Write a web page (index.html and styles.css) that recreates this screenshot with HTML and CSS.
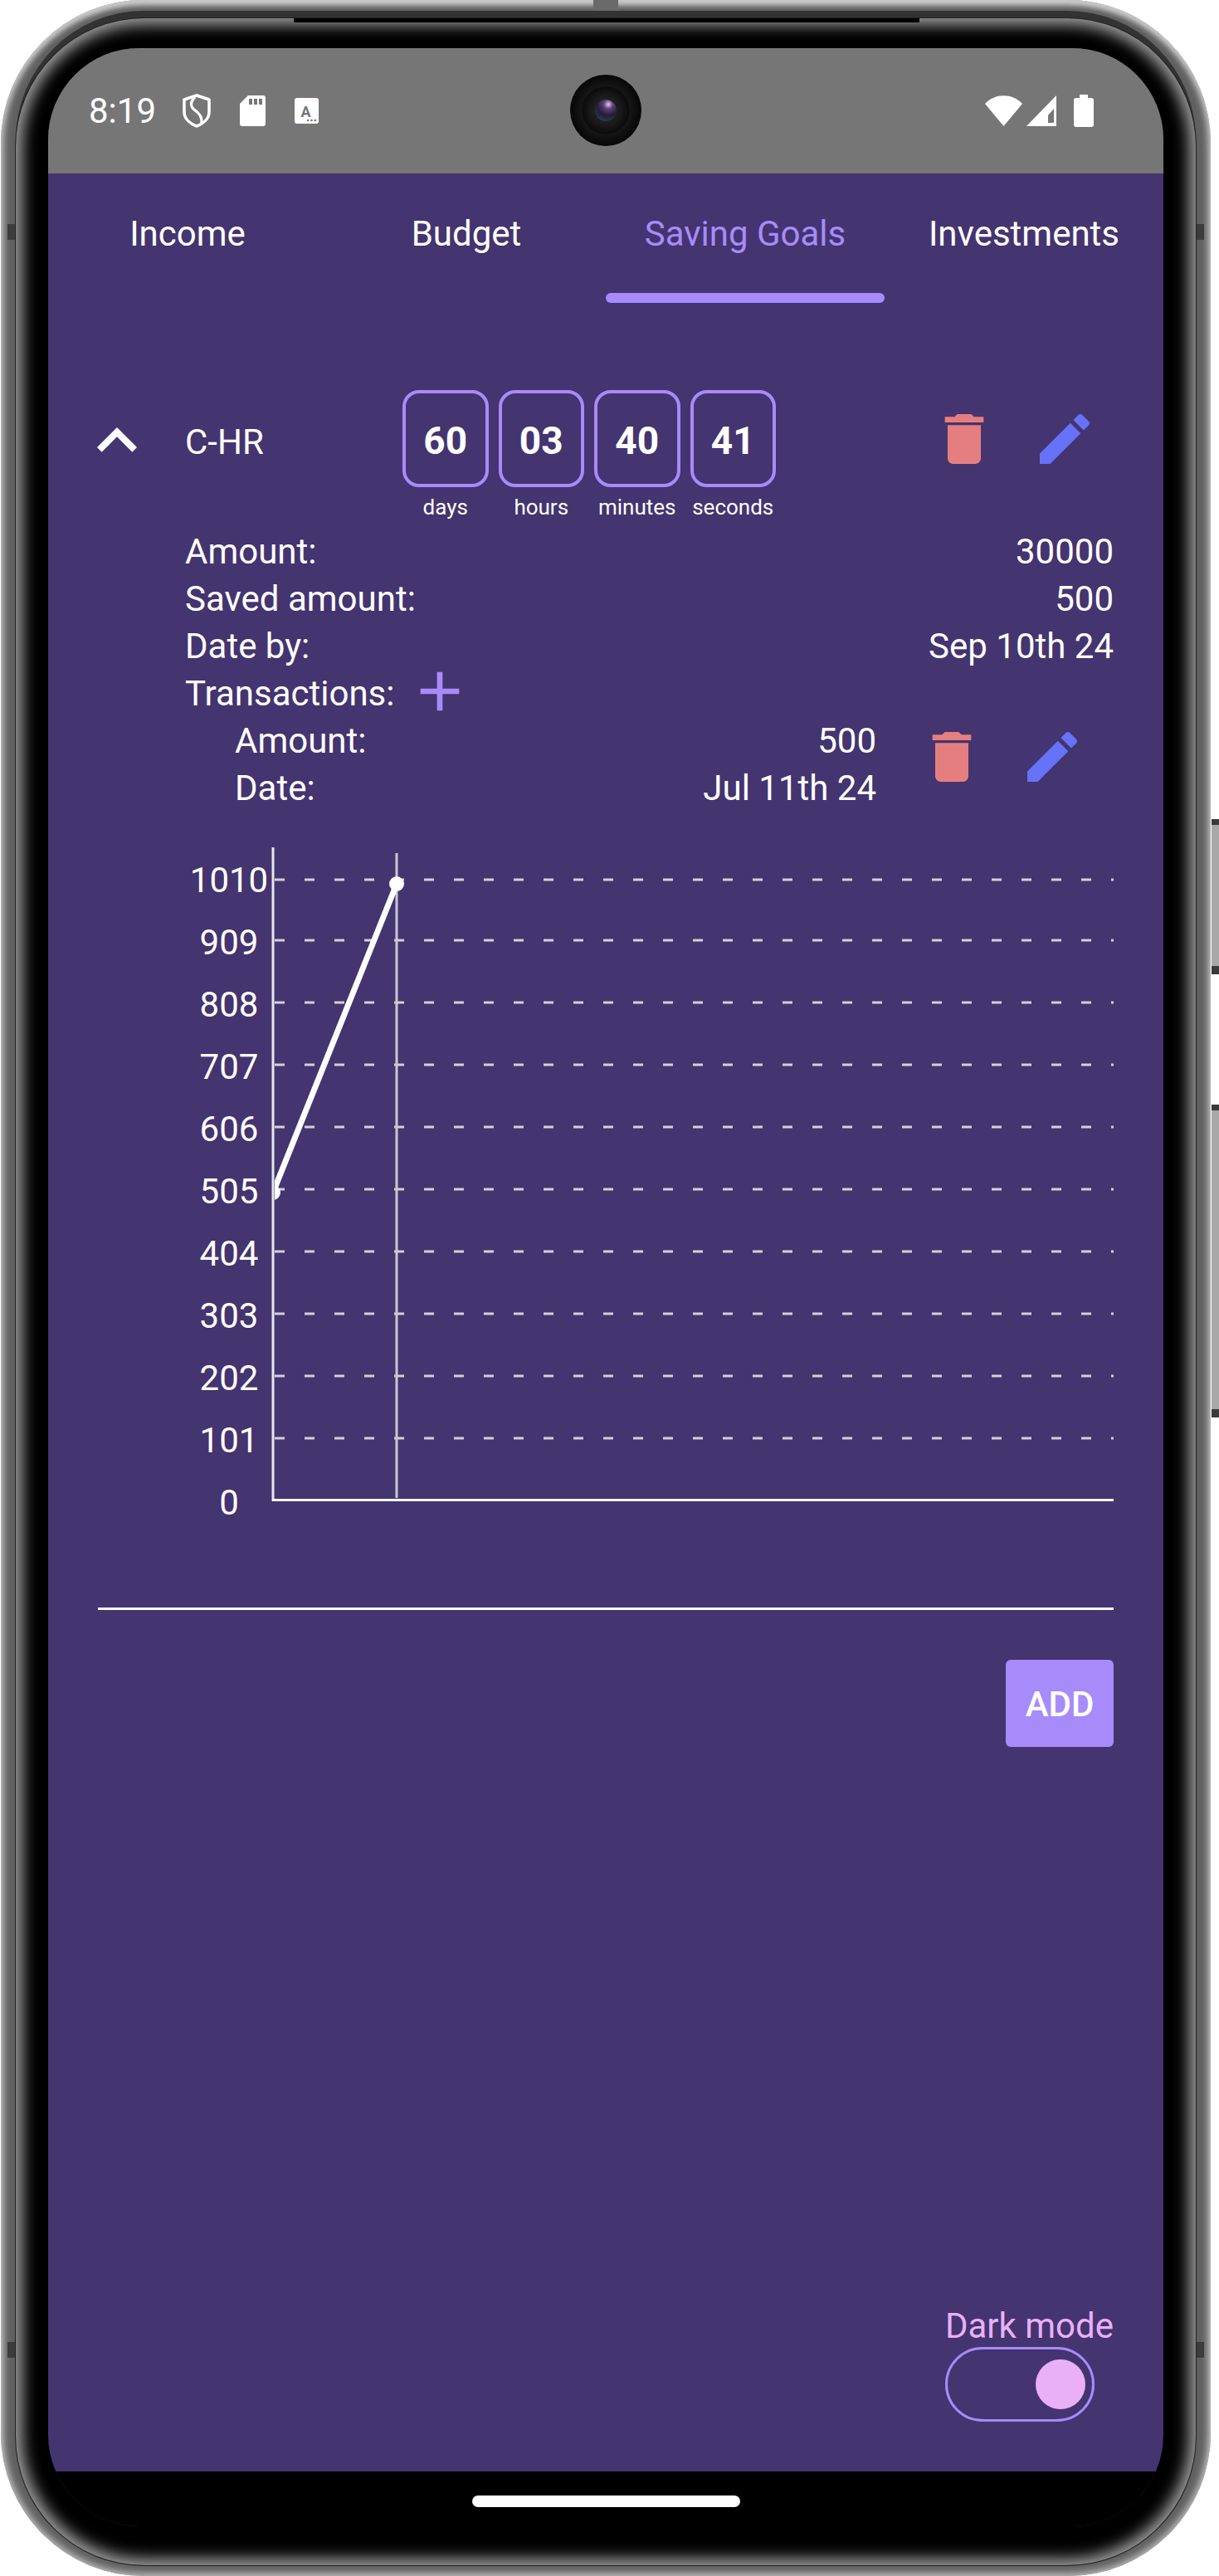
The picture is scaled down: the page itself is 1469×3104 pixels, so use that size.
FILE: index.html
```html
<!DOCTYPE html>
<html>
<head lang="en">
    <meta charset="UTF-8">
    <title>Saving Goals</title>
    <link rel="stylesheet" href="styles.css">
</head>
<body>
<div class="phone">
    <span class="slot-top"></span>
    <span class="seam seam-top"></span>
    <span class="seam seam-lt"></span>
    <span class="seam seam-rt"></span>
    <span class="seam seam-lb"></span>
    <span class="seam seam-rb"></span>
    <span class="side-btn side-btn-power"></span>
    <span class="side-btn side-btn-volume"></span>

    <div class="bezel">
        <div class="screen">
            <div class="camera"><span class="lens"></span></div>

            <div class="status-bar">
                <span class="time">8:19</span>
                <svg class="st-shield" width="34" height="41" viewBox="0 0 34 41">
                    <path d="M17 2L32 7V22C32 30 25 36 17 39C9 36 2 30 2 22V7Z" fill="none" stroke="#fff" stroke-width="3.6" stroke-linejoin="round"/>
                    <path d="M15 4C10 9 9 13 12 17C16 22 24 24 23 36" fill="none" stroke="#fff" stroke-width="3.2"/>
                </svg>
                <svg width="31" height="37" viewBox="0 0 31 37">
                    <path d="M10 0H28a3 3 0 0 1 3 3V34a3 3 0 0 1-3 3H3a3 3 0 0 1-3-3V10Z" fill="#fff"/>
                    <path d="M11 4h4v7h-4zM17 4h4v7h-4zM23 4h4v7h-4z" fill="#767676"/>
                </svg>
                <svg width="29" height="31" viewBox="0 0 29 31">
                    <rect width="29" height="31" rx="3" fill="#fff"/>
                    <text class="st-letter" x="13.5" y="23">A</text>
                    <circle cx="16" cy="27" r="1.3" fill="#767676"/>
                    <circle cx="20.5" cy="27" r="1.3" fill="#767676"/>
                    <circle cx="25" cy="27" r="1.3" fill="#767676"/>
                </svg>
                <div class="status-right">
                    <svg class="st-wifi" width="45" height="37" viewBox="0 0 45 37">
                        <path d="M22.5 37L0 10C12-3 33-3 45 10Z" fill="#fff"/>
                    </svg>
                    <svg class="st-signal" width="36" height="37" viewBox="0 0 36 37">
                        <path d="M0 37L36 0V37ZM26 24V33H33V16Z" fill="#fff" fill-rule="evenodd"/>
                    </svg>
                    <svg width="24" height="39" viewBox="0 0 24 39">
                        <path d="M7 0H17V4H21a3 3 0 0 1 3 3V36a3 3 0 0 1-3 3H3a3 3 0 0 1-3-3V7a3 3 0 0 1 3-3H7Z" fill="#fff"/>
                    </svg>
                </div>
            </div>

            <div class="main">
                <div class="tabs">
                    <div class="tab">Income</div>
                    <div class="tab">Budget</div>
                    <div class="tab tab-active">Saving Goals<span class="tab-line"></span></div>
                    <div class="tab">Investments</div>
                </div>

                <div class="goal-head">
                    <svg class="chevron" viewBox="0 0 24 24"><path d="M7.41 15.41L12 10.83l4.59 4.58L18 14l-6-6-6 6z"/></svg>
                    <div class="goal-title">C-HR</div>
                    <div class="timers">
                        <div class="timer"><div class="timer-box">60</div><div class="timer-label">days</div></div>
                        <div class="timer"><div class="timer-box">03</div><div class="timer-label">hours</div></div>
                        <div class="timer"><div class="timer-box">40</div><div class="timer-label">minutes</div></div>
                        <div class="timer"><div class="timer-box">41</div><div class="timer-label">seconds</div></div>
                    </div>
                    <div class="actions goal-actions">
                        <svg class="icon-trash" viewBox="0 0 24 24"><path d="M6 19c0 1.1.9 2 2 2h8c1.1 0 2-.9 2-2V7H6v12zM19 4h-3.5l-1-1h-5l-1 1H5v2h14V4z"/></svg>
                        <svg class="icon-edit" viewBox="0 0 24 24"><path d="M3 17.25V21h3.75L17.81 9.94l-3.75-3.75L3 17.25zM20.71 7.04c.39-.39.39-1.02 0-1.41l-2.34-2.34c-.39-.39-1.02-.39-1.41 0l-1.83 1.83 3.75 3.75 1.83-1.83z"/></svg>
                    </div>
                </div>

                <div class="details">
                    <div class="row"><span>Amount:</span><span>30000</span></div>
                    <div class="row"><span>Saved amount:</span><span>500</span></div>
                    <div class="row"><span>Date by:</span><span>Sep 10th 24</span></div>
                    <div class="row-add">
                        <span>Transactions:</span>
                        <svg class="icon-add" viewBox="0 0 24 24"><path d="M19 13h-6v6h-2v-6H5v-2h6V5h2v6h6v2z"/></svg>
                    </div>
                </div>

                <div class="transaction">
                    <div class="transaction-text">
                        <div class="row"><span>Amount:</span><span>500</span></div>
                        <div class="row"><span>Date:</span><span>Jul 11th 24</span></div>
                    </div>
                    <div class="actions transaction-actions">
                        <svg class="icon-trash" viewBox="0 0 24 24"><path d="M6 19c0 1.1.9 2 2 2h8c1.1 0 2-.9 2-2V7H6v12zM19 4h-3.5l-1-1h-5l-1 1H5v2h14V4z"/></svg>
                        <svg class="icon-edit" viewBox="0 0 24 24"><path d="M3 17.25V21h3.75L17.81 9.94l-3.75-3.75L3 17.25zM20.71 7.04c.39-.39.39-1.02 0-1.41l-2.34-2.34c-.39-.39-1.02-.39-1.41 0l-1.83 1.83 3.75 3.75 1.83-1.83z"/></svg>
                    </div>
                </div>

                <!-- chart: viewBox is in page coordinates -->
                <svg class="chart" width="1122" height="830" viewBox="220 1021 1122 830">
                    <defs>
                        <clipPath id="plot"><rect x="331" y="1021" width="1011" height="810"/></clipPath>
                    </defs>
                    <g class="grid">
                        <line x1="331" x2="1342" y1="1060" y2="1060"/>
                        <line x1="331" x2="1342" y1="1133" y2="1133"/>
                        <line x1="331" x2="1342" y1="1208" y2="1208"/>
                        <line x1="331" x2="1342" y1="1283" y2="1283"/>
                        <line x1="331" x2="1342" y1="1358" y2="1358"/>
                        <line x1="331" x2="1342" y1="1433" y2="1433"/>
                        <line x1="331" x2="1342" y1="1508" y2="1508"/>
                        <line x1="331" x2="1342" y1="1583" y2="1583"/>
                        <line x1="331" x2="1342" y1="1658" y2="1658"/>
                        <line x1="331" x2="1342" y1="1733" y2="1733"/>
                    </g>
                    <line class="cursor" x1="478" x2="478" y1="1028" y2="1805"/>
                    <line class="axis" x1="329" x2="329" y1="1021" y2="1809"/>
                    <line class="axis-x" x1="328" x2="1342" y1="1807.5" y2="1807.5"/>
                    <g clip-path="url(#plot)">
                        <line class="series" x1="329" y1="1437" x2="478" y2="1065"/>
                        <circle class="dot" cx="329" cy="1437" r="9"/>
                        <circle class="dot" cx="478" cy="1065" r="9"/>
                    </g>
                    <g class="ticks">
                        <text x="276" y="1075">1010</text>
                        <text x="276" y="1150">909</text>
                        <text x="276" y="1225">808</text>
                        <text x="276" y="1300">707</text>
                        <text x="276" y="1375">606</text>
                        <text x="276" y="1450">505</text>
                        <text x="276" y="1525">404</text>
                        <text x="276" y="1600">303</text>
                        <text x="276" y="1675">202</text>
                        <text x="276" y="1750">101</text>
                        <text x="276" y="1825">0</text>
                    </g>
                </svg>

                <div class="divider"></div>
                <div class="add-btn">ADD</div>

                <div class="theme">
                    <div class="theme-label">Dark mode</div>
                    <div class="switch"><span class="switch-thumb"></span></div>
                </div>
            </div>

            <div class="nav-bar"><span class="home-bar"></span></div>
        </div>
    </div>
</div>
</body>
</html>
```

FILE: styles.css
```css
*{
    margin: 0;
    padding: 0;
    box-sizing: border-box;
}
body{
    background: #ffffff;
    font-family: Roboto, "Noto Sans", sans-serif;
    color: #ffffff;
}

/* device frame */
.phone{
    position: relative;
    width: 1458px;
    height: 3104px;
    margin-left: 1px;
    padding: 22px 18px 13px 18px;
    border-radius: 172px;
    background: #606060;
    box-shadow: inset 0 0 10px 3px #c4c4c4, inset 0 7px 7px -2px #dcdcdc;
}
.bezel{
    height: 100%;
    padding: 36px 39px 47px 39px;
    border-radius: 155px;
    background: #000000;
    box-shadow: 0 0 0 1px #222222, 0 -9px 0 0 #333333, inset 0 0 18px 8px #a0a0a0;
}
.slot-top{
    position: absolute;
    left: 353px;
    top: 22px;
    width: 754px;
    height: 5px;
    background: #000000;
}
.seam{
    position: absolute;
    background: #3c3c3c;
}
.seam-top{
    left: 714px;
    top: 0;
    width: 30px;
    height: 13px;
    background: #6a6a6a;
}
.seam-lt,.seam-rt,.seam-lb,.seam-rb{
    width: 9px;
    height: 19px;
}
.seam-lt{ left: 8px; top: 270px; }
.seam-rt{ right: 8px; top: 270px; }
.seam-lb{ left: 8px; top: 2822px; }
.seam-rb{ right: 8px; top: 2822px; }
.side-btn{
    position: absolute;
    left: 1459px;
    width: 9px;
    background: #a8a8a8;
    border-top: 7px solid #3a3a3a;
    border-bottom: 10px solid #3a3a3a;
}
.side-btn-power{
    top: 987px;
    height: 187px;
}
.side-btn-volume{
    top: 1331px;
    height: 377px;
}

.screen{
    position: relative;
    display: flex;
    flex-direction: column;
    height: 100%;
    overflow: hidden;
    border-radius: 110px;
    background: #44346f;
}
.camera{
    position: absolute;
    left: 629px;
    top: 32px;
    width: 86px;
    height: 86px;
    display: flex;
    align-items: center;
    justify-content: center;
    border-radius: 50%;
    background: radial-gradient(circle, #2b2b2b 0, #1a1a1a 18px, #0b0b0b 28px, #161616 29px, #060606 43px);
}
.lens{
    width: 26px;
    height: 26px;
    border-radius: 50%;
    background: radial-gradient(circle at 62% 22%, #e8c8ee 0, #5c3f78 22%, #241c38 52%, #2a4656 92%);
}

/* status bar */
.status-bar{
    flex: none;
    display: flex;
    align-items: center;
    gap: 35px;
    height: 151px;
    padding: 0 84px 0 49px;
    background: #767676;
}
.time{
    margin-right: -3px;
    font-size: 42px;
    line-height: 48px;
}
.st-shield{
    margin-top: -1px;
}
.st-letter{
    font-size: 18px;
    font-weight: 700;
    text-anchor: middle;
    fill: #767676;
}
.status-right{
    display: flex;
    align-items: center;
    margin-left: auto;
}
.st-wifi{
    margin-right: 5px;
}
.st-signal{
    margin-right: 21px;
}

.main{
    flex: 1;
    display: flex;
    flex-direction: column;
    font-size: 42px;
    line-height: 57px;
}

/* tabs */
.tabs{
    flex: none;
    display: flex;
    height: 156px;
}
.tab{
    flex: 1;
    padding-top: 49px;
    text-align: center;
    line-height: 47px;
}
.tab-active{
    color: #a78bfa;
}
.tab-line{
    display: block;
    height: 12px;
    margin-top: 48px;
    border-radius: 6px;
    background: #a78bfa;
}

/* goal header */
.goal-head{
    flex: none;
    display: flex;
    align-items: flex-start;
    height: 166px;
    margin-top: 105px;
    padding-left: 35px;
}
.chevron{
    width: 96px;
    height: 96px;
    margin-top: 13px;
    fill: #ffffff;
}
.goal-title{
    width: 262px;
    margin-left: 34px;
    margin-top: 34px;
}
.timers{
    display: flex;
    gap: 12px;
}
.timer{
    width: 103.5px;
    text-align: center;
}
.timer-box{
    height: 117px;
    border: 4px solid #a78bfa;
    border-radius: 20px;
    font-size: 46px;
    font-weight: 700;
    line-height: 114px;
}
.timer-label{
    margin-top: 9px;
    font-size: 26px;
    line-height: 30px;
    white-space: nowrap;
}
.actions{
    display: flex;
    gap: 41px;
}
.actions svg{
    width: 80px;
    height: 80px;
}
.goal-actions{
    margin-left: 187px;
    margin-top: 19px;
}
.icon-trash{
    fill: #e57f7f;
}
.icon-edit{
    fill: #6672f8;
}
.icon-add{
    width: 80px;
    height: 80px;
    margin: -14px 0 -9px 15px;
    fill: #a78bfa;
}

/* details */
.details{
    flex: none;
    padding: 0 60px 0 165px;
}
.row{
    display: flex;
    justify-content: space-between;
}
.row-add{
    display: flex;
    align-items: flex-start;
}
.transaction{
    flex: none;
    display: flex;
    align-items: flex-start;
    padding-left: 225px;
}
.transaction-text{
    width: 773px;
}
.transaction-actions{
    margin-left: 51px;
    margin-top: 8px;
}

/* chart */
.chart{
    flex: none;
    display: block;
    margin: 43px 0 0 162px;
}
.grid line{
    stroke: #d2d0d6;
    stroke-width: 3;
    stroke-dasharray: 12 24;
}
.cursor{
    stroke: #c9c7cf;
    stroke-width: 3;
}
.axis{
    stroke: #e6e5ea;
    stroke-width: 3;
}
.axis-x{
    stroke: #ffffff;
    stroke-width: 3;
}
.series{
    stroke: #ffffff;
    stroke-width: 7;
}
.dot{
    fill: #ffffff;
}
.ticks text{
    font-size: 42px;
    text-anchor: middle;
    fill: #ffffff;
}

.divider{
    flex: none;
    height: 3px;
    margin: 86px 60px 0 60px;
    background: #ffffff;
}
.add-btn{
    flex: none;
    align-self: flex-end;
    width: 130px;
    height: 105px;
    margin: 60px 60px 0 0;
    border-radius: 6px;
    background: #a78bfa;
    font-weight: 500;
    line-height: 108px;
    text-align: center;
}

/* dark mode switch */
.theme{
    margin-top: auto;
    align-self: flex-end;
    margin-right: 60px;
    padding-bottom: 60px;
}
.theme-label{
    color: #e9b0f8;
    line-height: 47px;
    white-space: nowrap;
}
.switch{
    display: flex;
    align-items: center;
    justify-content: flex-end;
    width: 180px;
    height: 90px;
    margin: 2px 0 0 0;
    padding-right: 8px;
    border: 3px solid #a78bfa;
    border-radius: 45px;
}
.switch-thumb{
    width: 60px;
    height: 60px;
    border-radius: 50%;
    background: #e9b0f8;
}

.nav-bar{
    flex: none;
    display: flex;
    justify-content: center;
    height: 66px;
    padding-top: 29px;
    background: #000000;
}
.home-bar{
    width: 323px;
    height: 14px;
    border-radius: 7px;
    background: #ffffff;
}
```
